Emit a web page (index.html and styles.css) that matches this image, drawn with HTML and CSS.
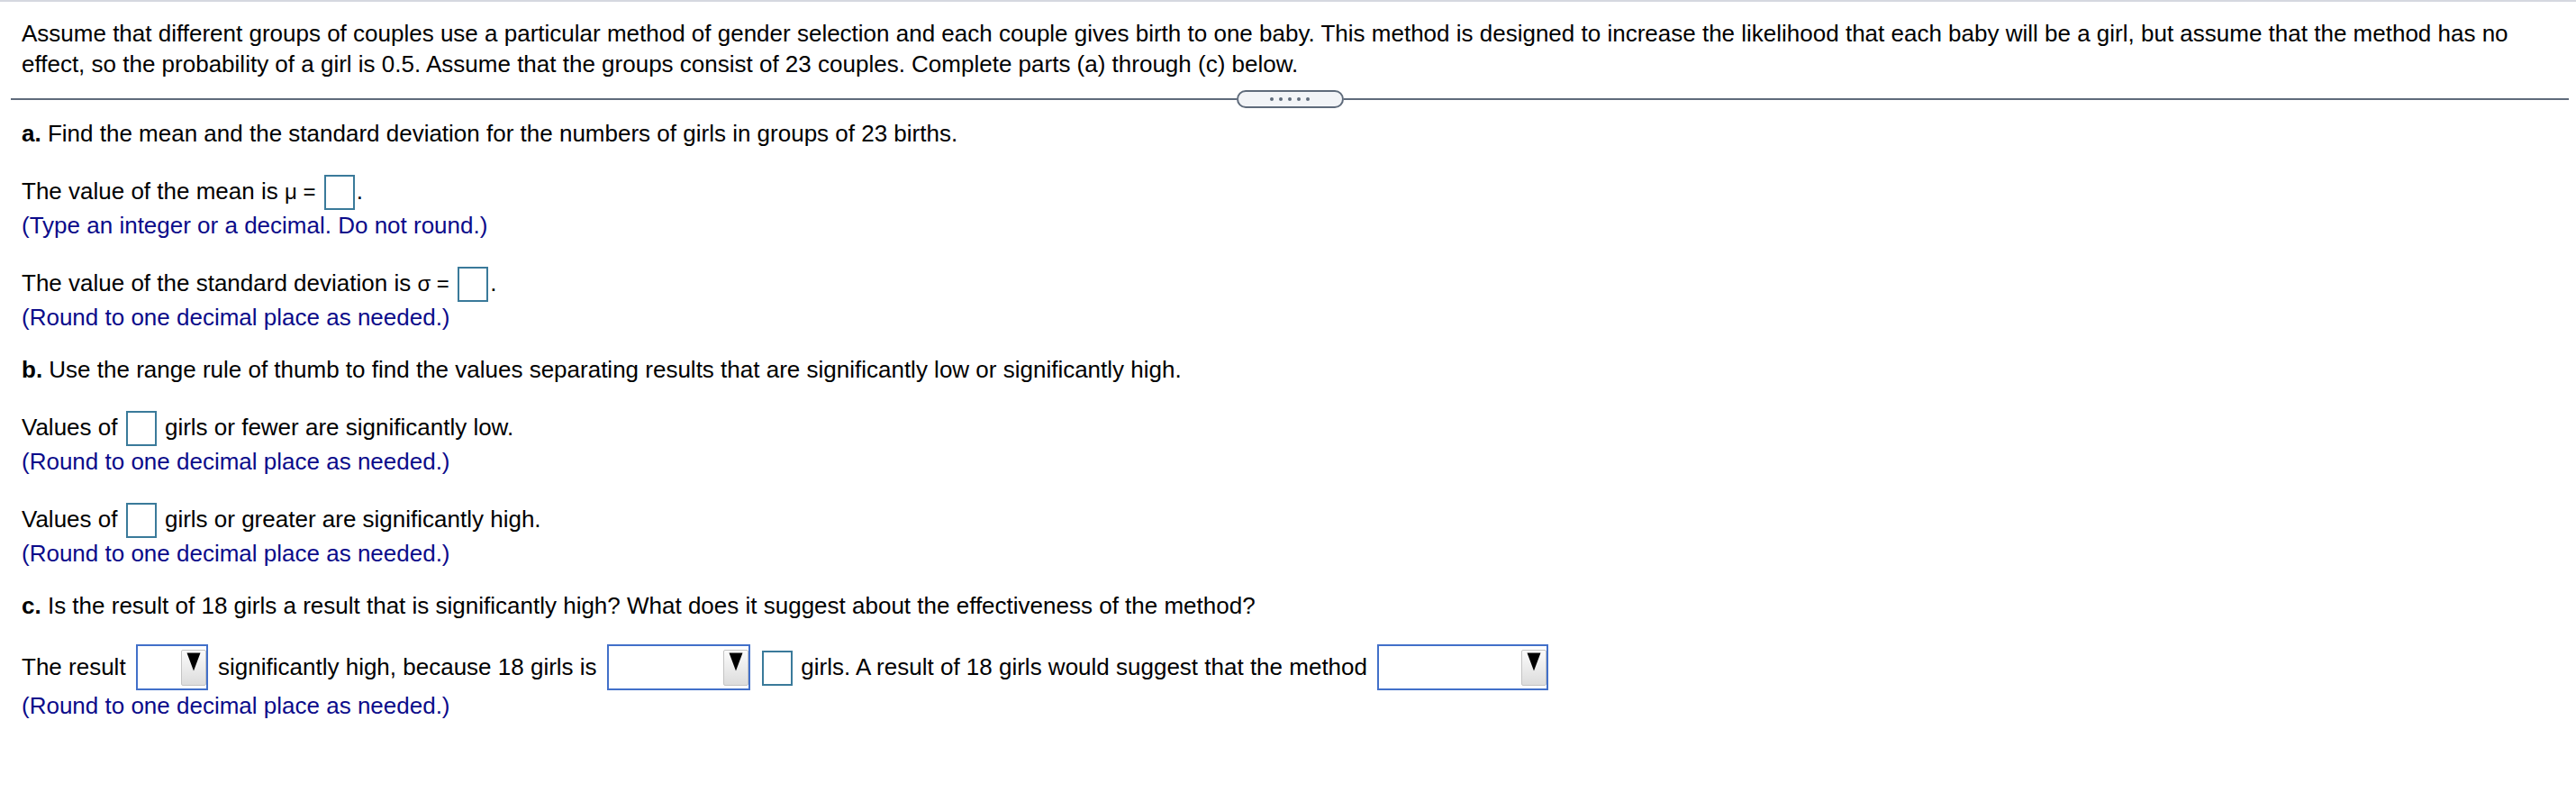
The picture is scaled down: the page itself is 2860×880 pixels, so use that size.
FILE: index.html
```html
<!DOCTYPE html>
<html lang="en">
<head>
<meta charset="utf-8">
<title>Gender selection</title>
<link rel="stylesheet" href="styles.css">
</head>
<body>
<div class="page">
  <p class="intro">Assume that different groups of couples use a particular method of gender selection and each couple gives birth to one baby. This method is designed to increase the likelihood that each baby will be a girl, but assume that the method has no effect, so the probability of a girl is 0.5. Assume that the groups consist of 23 couples. Complete parts (a) through (c) below.</p>

  <div class="divider"><div class="pill"><span class="dot"></span><span class="dot"></span><span class="dot"></span><span class="dot"></span><span class="dot"></span></div></div>

  <div class="content">
    <div class="part first"><b>a.</b> Find the mean and the standard deviation for the numbers of girls in groups of 23 births.</div>

    <div class="item">
      <div class="row">The value of the mean is <span class="sym">μ =</span> <span class="box"></span>.</div>
      <div class="hint">(Type an integer or a decimal. Do not round.)</div>
    </div>

    <div class="item">
      <div class="row">The value of the standard deviation is <span class="sym">σ =</span> <span class="box"></span>.</div>
      <div class="hint">(Round to one decimal place as needed.)</div>
    </div>

    <div class="part"><b>b.</b> Use the range rule of thumb to find the values separating results that are significantly low or significantly high.</div>

    <div class="item">
      <div class="row">Values of <span class="box"></span> girls or fewer are significantly low.</div>
      <div class="hint">(Round to one decimal place as needed.)</div>
    </div>

    <div class="item">
      <div class="row">Values of <span class="box"></span> girls or greater are significantly high.</div>
      <div class="hint">(Round to one decimal place as needed.)</div>
    </div>

    <div class="part"><b>c.</b> Is the result of 18 girls a result that is significantly high? What does it suggest about the effectiveness of the method?</div>

    <div class="item tall">
      <div class="row">The result <span class="sel s1"><span class="btn"><svg viewBox="0 0 16 21"><polygon points="0.5,0.5 15.5,0.5 8,20.5" fill="#000"/></svg></span></span> significantly high, because 18 girls is <span class="sel s2"><span class="btn"><svg viewBox="0 0 16 21"><polygon points="0.5,0.5 15.5,0.5 8,20.5" fill="#000"/></svg></span></span> <span class="box"></span> girls. A result of 18 girls would suggest that the method <span class="sel s3"><span class="btn"><svg viewBox="0 0 16 21"><polygon points="0.5,0.5 15.5,0.5 8,20.5" fill="#000"/></svg></span></span></div>
      <div class="hint">(Round to one decimal place as needed.)</div>
    </div>
  </div>
</div>
</body>
</html>
```

FILE: styles.css
```css
html, body {
  margin: 0;
  padding: 0;
  background: #ffffff;
}

body {
  font-family: "Liberation Sans", Arial, sans-serif;
  font-size: 26px;
  line-height: 34px;
  color: #000000;
}

.page {
  border-top: 2px solid #d5d8e0;
}

.intro {
  margin: 0;
  padding: 18px 24px 0 24px;
}

.divider {
  display: flex;
  align-items: center;
  height: 20px;
  margin: 12px 8px 0 12px;
}

.divider::before,
.divider::after {
  content: "";
  flex: 1;
  height: 2px;
  background: #5f6b7b;
}

.pill {
  width: 119px;
  height: 20px;
  box-sizing: border-box;
  border: 2px solid #5f6b7b;
  border-radius: 10px;
  background: #f2f4f7;
  display: flex;
  justify-content: center;
  align-items: center;
  gap: 6px;
}

.dot {
  width: 4px;
  height: 4px;
  border-radius: 50%;
  background: #5f6b7b;
}

.content {
  padding: 0 24px;
}

.part {
  margin-top: 24px;
}

.part.first {
  margin-top: 11px;
}

.item {
  margin-top: 29px;
}

.item.tall {
  margin-top: 26px;
}

.sym {
  font-size: 24px;
}

.hint {
  color: #0b0b8a;
}

.box {
  display: inline-block;
  width: 34px;
  height: 39px;
  box-sizing: border-box;
  border: 2px solid #3a7a9a;
  background: #ffffff;
  vertical-align: -12px;
  margin: 0 2px;
}

.sel {
  display: inline-block;
  overflow: hidden;
  box-sizing: border-box;
  height: 51px;
  border: 2px solid #4270c9;
  background: #ffffff;
  vertical-align: -17px;
  margin: 0 4px;
}

.s1 { width: 80px; }
.s2 { width: 159px; }
.s3 { width: 190px; }

.btn {
  display: flex;
  justify-content: center;
  align-items: flex-start;
  box-sizing: border-box;
  width: 28px;
  height: 40px;
  margin: 4px 0 0 auto;
  padding-top: 2px;
  border: 1px solid #c4c4c4;
  border-radius: 2px;
  background: linear-gradient(#fbfbfb, #dcdcdc);
}

.btn svg {
  display: block;
  width: 16px;
  height: 21px;
}
```
